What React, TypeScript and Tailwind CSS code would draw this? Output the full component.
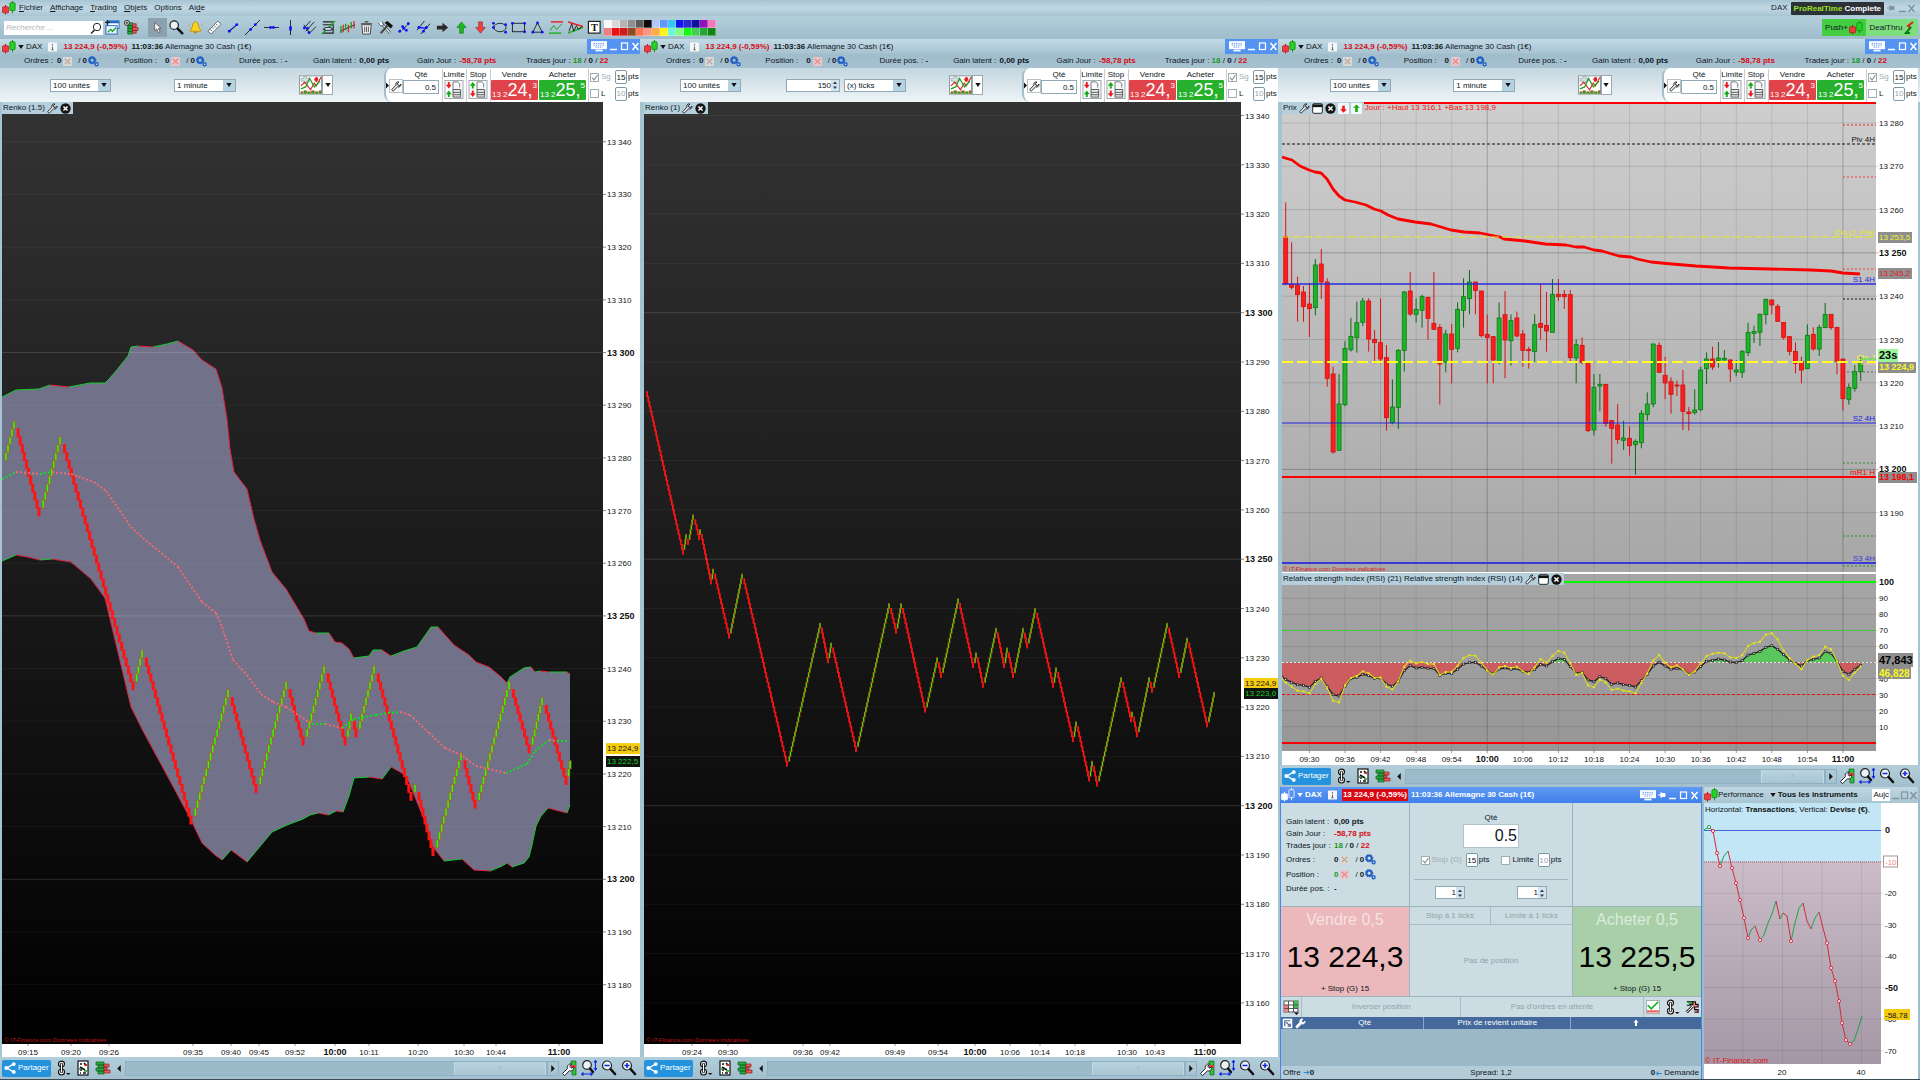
import { Fragment, type ReactNode } from 'react';
import { clsx } from 'clsx';

type Point = [number, number];
type Tick = [number, string];

const toPath = (pts: Point[]) => pts.map(([x, y]) => `${x},${y}`).join(' ');

/* ------------------------------------------------------------------ */
/* Icons                                                               */
/* ------------------------------------------------------------------ */

interface GlyphProps {
  children: ReactNode;
  className?: string;
}

function Glyph({ children, className = 'size-4' }: GlyphProps) {
  return (
    <svg viewBox="0 0 16 16" className={clsx('shrink-0', className)} fill="none" aria-hidden="true">
      {children}
    </svg>
  );
}

const CandlesIcon = ({ white = false }: { white?: boolean }) => (
  <Glyph className="size-[14px]">
    <path d="M4 4.500v11" stroke={white ? '#fff' : '#b01010'} />
    <rect x=".5" y="6.500" width="7" height="7" rx="1" fill={white ? '#fff' : '#f23a3a'} stroke={white ? '#fff' : '#a01010'} strokeWidth=".7" />
    <path d="M12 0v14" stroke={white ? '#fff' : '#0c8a0c'} />
    <rect x="9" y="2" width="6" height="9" rx="1" fill={white ? '#5b93ee' : '#27d327'} stroke={white ? '#fff' : '#0c8a0c'} strokeWidth=".9" />
  </Glyph>
);

const CaretDown = ({ className, color = '#111' }: { className?: string; color?: string }) => (
  <svg viewBox="0 0 8 6" className={clsx('h-1 w-[6px] shrink-0', className)} aria-hidden="true">
    <path d="M0 0h8L4 6z" fill={color} />
  </svg>
);

const WrenchIcon = ({ light = false }: { light?: boolean }) => (
  <Glyph className="size-[11px]">
    <path
      d="M14.500 4.500l-2 2-2.500-.5-.5-2.500 2-2C9.500.8 7 2 7 4.500c0 .6.100 1 .3 1.500L1.500 12c-1 1 1 3.200 2.300 2.200L9.500 8.500c3 1 5.500-1 5-4z"
      fill={light ? '#fff' : '#eef4f7'}
      stroke={light ? '#fff' : '#111'}
      strokeWidth="1.300"
    />
  </Glyph>
);

const CloseDot = () => (
  <Glyph className="size-[11px]">
    <circle cx="8" cy="8" r="7.500" fill="#151515" />
    <path d="M5 5l6 6M11 5l-6 6" stroke="#fff" strokeWidth="2.200" />
  </Glyph>
);

const WindowDot = () => (
  <Glyph className="size-[11px]">
    <rect x="1" y="1" width="14" height="14" rx="2" fill="#fff" stroke="#111" strokeWidth="1.300" />
    <path d="M1 2h14v4H1z" fill="#111" />
  </Glyph>
);

const ArrowTag = ({ up = false }: { up?: boolean }) => (
  <Glyph className="size-[11px]">
    <rect width="16" height="16" rx="1" fill="#f4f8fa" />
    {up ? <path d="M8 2l5 5H10v6H6V7H3z" fill="#1eae1e" /> : <path d="M8 14l5-5H10V4H6v5H3z" fill="#ee1c1c" />}
  </Glyph>
);

const GearsIcon = () => (
  <Glyph className="size-[11px]">
    <circle cx="6" cy="6" r="3.800" stroke="#1f5fc8" strokeWidth="3" />
    <circle cx="6" cy="6" r="5.400" stroke="#12449c" strokeDasharray="1.500 2" />
    <circle cx="12.500" cy="12" r="2.200" fill="#e6f0f8" stroke="#1f5fc8" strokeWidth="2" />
  </Glyph>
);

const CancelIcon = ({ red = false }: { red?: boolean }) => (
  <Glyph className="size-[9px]">
    <rect width="16" height="16" rx="1" fill={red ? '#e6c9cd' : '#dcdad6'} />
    <path d="M3 3l10 10M13 3L3 13" stroke={red ? '#ee8a8e' : '#b9aaa4'} strokeWidth="2.400" />
  </Glyph>
);

const InfoIcon = () => (
  <Glyph className="h-[10px] w-[9px]">
    <rect width="16" height="16" rx="1" fill="#f4f6f7" />
    <circle cx="8" cy="4" r="1.300" fill="#666" />
    <path d="M8 7v6M6 13h4" stroke="#666" strokeWidth="1.800" />
  </Glyph>
);

const KeyboardIcon = () => (
  <svg viewBox="0 0 18 12" className="h-[11px] w-[16px] shrink-0" aria-hidden="true">
    <rect x="0" y="0" width="18" height="9" fill="#fff" />
    <path d="M3 2.500h12M3 4.500h12M5 6.700h8" stroke="#4f8cf0" strokeDasharray="1.500 1" />
    <path d="M5 10.500h8" stroke="#fff" strokeWidth="2" />
  </svg>
);

const PinIcon = ({ color = '#fff' }: { color?: string }) => (
  <Glyph className="size-2">
    <path d="M0 8h6" stroke={color} strokeWidth="2" />
    <path d="M6 2v12M6 5h8v6H6z" fill={color} stroke={color} strokeWidth="2" />
  </Glyph>
);

function WindowButtons({ color = '#ffffff' }: { color?: string }) {
  return (
    <>
      <button aria-label="Réduire" className="h-[9px] w-[9px]">
        <svg viewBox="0 0 9 9" className="size-[9px]"><path d="M1 7.500h7" stroke={color} strokeWidth="1.500" /></svg>
      </button>
      <button aria-label="Agrandir" className="h-[9px] w-[9px]">
        <svg viewBox="0 0 9 9" className="size-[9px]"><rect x="1.500" y="1" width="6" height="6.500" fill="none" stroke={color} strokeWidth="1.200" /></svg>
      </button>
      <button aria-label="Fermer" className="h-[9px] w-[9px]">
        <svg viewBox="0 0 9 9" className="size-[9px]"><path d="M1.500 1l6 7M7.500 1l-6 7" stroke={color} strokeWidth="1.500" /></svg>
      </button>
    </>
  );
}

const MagnifierIcon = ({ sign }: { sign: '+' | '-' }) => (
  <Glyph>
    <circle cx="6" cy="5.500" r="4.500" fill="#e9f2f7" stroke="#222" strokeWidth="1.200" />
    <path d="M9.500 9l4.500 5" stroke="#111" strokeWidth="2.600" strokeLinecap="round" />
    <path d="M3.500 5.500h5" stroke="#1226e0" strokeWidth="1.500" />
    {sign === '+' && <path d="M6 3v5" stroke="#1226e0" strokeWidth="1.500" />}
  </Glyph>
);

const LinkIcon = () => (
  <Glyph>
    <ellipse cx="6.500" cy="4" rx="3" ry="2.800" fill="#fff" stroke="#111" strokeWidth="1.200" />
    <ellipse cx="6.500" cy="12" rx="3" ry="3" fill="#fff" stroke="#111" strokeWidth="1.200" />
    <path d="M6.500 4v8" stroke="#111" strokeWidth="2.600" strokeLinecap="round" />
    <path d="M6.500 4v8" stroke="#fff" strokeWidth="1" strokeLinecap="round" />
    <path d="M11 13h4.500l-2.200 2z" fill="#111" />
  </Glyph>
);

const DepthIcon = () => (
  <Glyph>
    <rect x="3" y="1" width="10" height="14" fill="#fff" stroke="#111" strokeWidth="1.200" />
    <path d="M5 4h2M9 3l2.500 2.500M5 7l5 3M5 10h2M8 13h3M5 13h1" stroke="#111" strokeWidth="1.600" />
    <path d="M9 5h3" stroke="#e02020" strokeWidth="1.500" />
    <path d="M4 9h2M9 11h3" stroke="#18a018" strokeWidth="1.500" />
  </Glyph>
);

const OrderBookIcon = () => (
  <Glyph>
    <path d="M1 2h8v3H1zM3 5h6v3H3zM1 8h8v3H1zM3 11h6v3H3z" fill="#28ab3c" stroke="#0c5f1c" strokeWidth=".7" />
    <path d="M9 4h5v3H9zM9 7h3v3H9zM9 10h6v3H9z" fill="#e85a5a" stroke="#8f1e1e" strokeWidth=".7" />
  </Glyph>
);

const ShareIcon = () => (
  <Glyph className="size-3">
    <path d="M13 2.500L4 8l9 5.500" stroke="#fff" strokeWidth="1.800" />
    <circle cx="13" cy="2.800" r="2.600" fill="#fff" />
    <circle cx="3.200" cy="8" r="2.800" fill="#fff" />
    <circle cx="13" cy="13.200" r="2.600" fill="#fff" />
  </Glyph>
);

const SettingsGreenIcon = () => (
  <Glyph>
    <path d="M10 1h5v5h-5zM11 6h4v9h-4z" fill="#2fbf3c" stroke="#0c6a1c" strokeWidth=".7" />
    <path d="M10 5h5v3h-5z" fill="#e04040" />
    <path d="M1.500 13.500l5-5c-1-2 1-5 4-4.500l-1.700 2.200 1.700 2 2.200-1.500c.6 3-2 5-4.200 4l-5 5z" fill="#fff" stroke="#111" strokeWidth=".9" />
  </Glyph>
);

const FitIcon = () => (
  <Glyph>
    <circle cx="6" cy="5" r="4.300" fill="#e9f2f7" stroke="#222" strokeWidth="1.200" />
    <path d="M9 8.500l3 3.500" stroke="#111" strokeWidth="2.400" strokeLinecap="round" />
    <path d="M14.500 1v8M13 2.500L14.500.5 16 2.500M13 8l1.500 2L16 8M1 14h10M2.500 12.500L.5 14l2 1.500M9.500 12.500l2 1.500-2 1.500" stroke="#1226e0" strokeWidth="1.100" />
  </Glyph>
);

const IndicatorIcon = () => (
  <svg viewBox="0 0 24 20" className="h-5 w-[23px]" aria-hidden="true">
    <rect x=".5" y=".5" width="23" height="19" fill="#fff" stroke="#8a9aa2" />
    <path d="M2 3h3V1h3v2h3v3H8v2H5V6H2z" fill="#d5dde2" stroke="#8a969c" strokeWidth=".6" />
    <path d="M2 11l4-4 6 8 4-7 2 3 5-9" fill="none" stroke="#d92020" strokeWidth="1.200" />
    <path d="M2 14l5-2 4-9 5 9 6-6" fill="none" stroke="#20a020" strokeWidth="1.300" />
    <path d="M16 4c1-3 4-3 4 0 0 2-2 3-2 3s-2-1-2-3z" fill="#e82020" />
    <path d="M2 19v-2h2v2m1 0v-3h3v3m1 0v-2h3v2m1 0v-3h3v3m1 0v-2h3v2m1 0v-3h2v3" fill="#16b016" stroke="#e02020" strokeWidth=".5" />
  </svg>
);

const OrderSheetIcon = ({ stop = false }: { stop?: boolean }) => (
  <svg viewBox="0 0 20 20" className="h-[19px] w-5" aria-hidden="true">
    <rect x=".5" y=".5" width="19" height="19" fill="#f7f9fa" stroke="#9aa7ad" />
    <path d="M9 2h5l2 2v4M9 2v8" fill="none" stroke="#777" />
    <path d="M9 10h8v8H9zM9 13h8M9 15.500h8" fill="#e8ecee" stroke="#555" />
    <path d="M3.500 2h2v3h2l-3 4-3-4h2z" fill={stop ? '#12a812' : '#e81c1c'} transform={stop ? 'rotate(180 4.500 5.500)' : undefined} />
    <path d="M3.500 11h2v3h2l-3 4-3-4h2z" fill={stop ? '#e81c1c' : '#12a812'} transform={stop ? undefined : 'rotate(180 4.500 14.500)'} />
  </svg>
);

const ends = (pts: Point[]) => pts.map(([x, y]) => <circle key={`${x}-${y}`} cx={x} cy={y} r="1.500" fill="#1010f0" />);

const tools: { name: string; icon: ReactNode; active?: boolean }[] = [
  {
    name: 'Nouveau graphique',
    icon: <><rect x="3" y="1" width="12" height="8" fill="#fff" stroke="#2268c8" /><path d="M3 1h12v2.500H3z" fill="#2268c8" /><rect x="1" y="6" width="12" height="9" fill="#eaf4ff" stroke="#2268c8" /><path d="M3 13l3-3 2 2 4-4" stroke="#16a016" strokeWidth="1.400" /><path d="M0 2.500h5M2.500 0v5" stroke="#222" strokeWidth="1.400" /></>,
  },
  {
    name: 'Carnet',
    icon: <><path d="M4 3h5v3H4zM4 6h5v3H4zM4 9h5v3H4zM4 12h5v3H4z" fill="#28ab3c" stroke="#0c5f1c" strokeWidth=".8" /><path d="M9 4h4v3H9zM9 8h6v3H9zM9 11h4v3H9z" fill="#e85a5a" stroke="#8f1e1e" strokeWidth=".8" /><circle cx="3" cy="3" r="2.700" fill="#fff" stroke="#222" /><path d="M3 1.500v3M1.500 3h3" stroke="#222" /></>,
  },
  { name: 'Curseur', active: true, icon: <path d="M5 2.500v9l2.200-2 1.800 4 1.800-.8L9 9h2.800z" fill="#fff" stroke="#555" strokeWidth=".9" /> },
  { name: 'Loupe', icon: <><circle cx="5.500" cy="5.500" r="4.500" fill="#e9f2f7" stroke="#222" strokeWidth="1.300" /><path d="M9.200 9.200l5 5" stroke="#111" strokeWidth="2.600" strokeLinecap="round" /></> },
  { name: 'Alerte', icon: <><path d="M8 1.500c-3.500 1-2.500 5.500-4.500 8-1 1-1.200 1.800-1 2.500h11c.3-.7 0-1.500-1-2.500-2-2.500-1-7-4.500-8z" fill="#ffd21c" stroke="#b78200" strokeWidth=".8" /><path d="M6 12.500c0 2.500 4 2.500 4 0z" fill="#c88a00" /><path d="M2 4c-1 1-1.500 2-1.500 3M14 4c1 1 1.500 2 1.500 3" stroke="#d8a820" strokeWidth=".8" /></> },
  { name: 'Règle', icon: <><path d="M1 12L11.500 1 15 4.500 4.500 15z" fill="#fafafa" stroke="#666" /><path d="M3.500 10l2 2M5.500 8l1.500 1.500M7.500 6l2 2M9.500 4L11 5.500" stroke="#555" /></> },
  { name: 'Segment', icon: <><path d="M3.500 12l8-7" stroke="#1010a0" strokeWidth="1.200" />{ends([[3.5, 12], [11.5, 5]])}</> },
  { name: 'Droite', icon: <><path d="M0 16L16 0" stroke="#222" />{ends([[6, 10], [11, 5]])}</> },
  { name: 'Horizontale', icon: <><path d="M0 8h16" stroke="#222" />{ends([[7, 8], [10, 8]])}</> },
  { name: 'Verticale', icon: <><path d="M8 0v16" stroke="#222" />{ends([[8, 8], [8, 10]])}</> },
  { name: 'Fourchette', icon: <><path d="M2 9l7-8M4 12L13 2M7 15l8-8M2 5l6 9" stroke="#222" />{ends([[2.5, 8.5], [7.5, 13.5], [6, 9]])}</> },
  { name: 'Fibonacci', icon: <><path d="M2 2h11M2 5h11v9H2M2 10h11" stroke="#222" strokeWidth="1.200" /><path d="M1 15L15 1" stroke="#18a018" strokeWidth="1.400" /><path d="M4 8h7v3H4z" stroke="#333" fill="#cde" /></> },
  { name: 'Cycle', icon: <><path d="M0 12l16-7" stroke="#222" /><path d="M1 6v8M6 4v7M12 2v7" stroke="#18a018" strokeWidth="1.400" /><path d="M3.500 5v8M9 5v8M15 1v8" stroke="#e02020" strokeWidth="1.300" /></> },
  { name: 'Supprimer', icon: <><path d="M3 5h10l-1 10H4z" fill="#f0f0f0" stroke="#444" /><path d="M2 4h12M6 2h4" stroke="#444" strokeWidth="1.300" /><path d="M6 7v6M8 7v6M10 7v6" stroke="#555" /></> },
  { name: 'Outils', icon: <><path d="M4 4l9 10" stroke="#444" strokeWidth="2.800" /><path d="M4 4l9 10" stroke="#f4f4f4" strokeWidth="1.400" /><path d="M1 3c0 3 3 4 5 2.500L4.500 1.500" fill="#fff" stroke="#444" /><path d="M10 6L3 14" stroke="#444" strokeWidth="2.200" /><path d="M7 3l3-2 6 5-2.500 3z" fill="#111" /></> },
  { name: 'Points', icon: <><path d="M2 13L14 3" stroke="#222" strokeDasharray="3 1" />{ends([[3, 12], [6, 7], [12, 4], [10, 11], [7.5, 9]])}</> },
  { name: 'Canal', icon: <><path d="M1 11L9 1M5 15L15 4" stroke="#222" /><path d="M3 8l9 1" stroke="#1010f0" strokeWidth="1.400" />{ends([[3, 8], [8, 12], [11, 8]])}</> },
  { name: 'Flèche', icon: <path d="M2 6h6V3l6 5-6 5v-3H2z" fill="#2a2a2a" /> },
  { name: 'Flèche haut', icon: <path d="M8 2l5 6h-3v6H6V8H3z" fill="#1cb81c" stroke="#0a700a" strokeWidth=".6" /> },
  { name: 'Flèche bas', icon: <path d="M8 14l5-6h-3V2H6v6H3z" fill="#f04444" stroke="#901010" strokeWidth=".6" /> },
  { name: 'Ellipse', icon: <><ellipse cx="8.500" cy="8" rx="6.500" ry="4.500" stroke="#222" />{ends([[1.5, 3.5], [14.5, 13], [1.5, 8], [14.5, 5]])}</> },
  { name: 'Rectangle', icon: <><rect x="1.500" y="3.500" width="13" height="9" stroke="#222" />{ends([[1.5, 3.5], [14.5, 12.5], [14.5, 3.5]])}</> },
  { name: 'Triangle', icon: <><path d="M8 3l5 10H3z" stroke="#222" />{ends([[8, 3], [13, 13], [3, 13]])}</> },
  { name: 'Support', icon: <><path d="M2 2h13" stroke="#e82020" strokeWidth="1.500" /><path d="M0 14h13" stroke="#18b018" strokeWidth="1.500" /><path d="M1 11l4-5 3 4 6-6" stroke="#18a018" /></> },
  { name: 'Biseau', icon: <><path d="M0 2l16 5" stroke="#e82020" strokeWidth="1.600" /><path d="M0 14l16-6" stroke="#18b018" strokeWidth="1.600" /><path d="M1 12l3-8 2 8 3-6 2 4 4-3" stroke="#222" /></> },
  { name: 'Texte', icon: <><rect x="1.500" y="1.500" width="12.500" height="12.500" fill="#fff" stroke="#222" strokeWidth="1.300" /><text x="8" y="12" textAnchor="middle" fill="#111" className="font-['Liberation_Serif',serif] text-[11px] font-bold">T</text></> },
];

const palette = [
  ['#f8f8f8', '#d8d8d8', '#b4b4b4', '#909090', '#5c5c5c', '#0c0c0c', '#b4c4ff', '#6098fc', '#38c4f4', '#1414ec', '#2828cc', '#101098', '#9410bc', '#f478bc'],
  ['#ec8080', '#e81414', '#d01c1c', '#8c4a24', '#fc7450', '#fc9484', '#fcac40', '#fcf414', '#6cf4d4', '#84fc84', '#14f814', '#44cc54', '#2ca43c', '#108414'],
];

/* ------------------------------------------------------------------ */
/* Chart data                                                          */
/* ------------------------------------------------------------------ */

// [x, price above 13 000] of every reversal
const renkoLeft: Point[] = [
  [4, 279.5], [14, 287], [39, 269], [60, 284], [133, 236], [142, 243.5], [191, 210.5], [228, 236], [256, 216.5],
  [286, 237.5], [303, 225.5], [324, 240.5], [345, 225.5], [351, 231.5], [356, 227], [374, 240.5], [411, 215],
  [415, 218], [433, 204.5], [461, 224], [475, 213.5], [509, 237.5], [529, 224], [542, 234.5], [566, 218], [570, 222.5],
];

const renkoMiddle: Point[] = [
  [646, 284], [683, 251], [686, 255], [688, 253], [693, 259], [699, 254], [700, 256], [711, 245], [713, 248],
  [729, 234], [742, 247], [787, 208], [820, 237], [828, 229], [831, 233], [856, 211], [889, 241], [896, 235],
  [901, 241], [925, 219], [937, 230], [941, 226], [958, 242], [973, 228], [976, 231], [983, 224], [996, 236],
  [1004, 228], [1007, 232], [1013, 226], [1023, 236], [1027, 232], [1035, 240], [1053, 224], [1056, 228],
  [1073, 213], [1076, 217], [1089, 205], [1092, 209], [1097, 204], [1121, 226], [1131, 217], [1132, 219],
  [1137, 214], [1149, 226], [1152, 223], [1167, 237], [1179, 226], [1187, 234], [1207, 216], [1214, 223],
];

const bandTop: Point[] = [
  [2, 397], [16, 390], [39, 389], [50, 385], [69, 387], [90, 383], [105, 383], [109, 379], [116, 371], [128, 356],
  [131, 347], [138, 346], [153, 347], [167, 344], [178, 341], [193, 350], [202, 360], [216, 369], [222, 388],
  [227, 419], [230, 449], [234, 472], [247, 489], [254, 519], [260, 540], [272, 572], [286, 589], [304, 619],
  [309, 631], [316, 633], [329, 633], [335, 642], [342, 643], [349, 649], [354, 658], [369, 656], [373, 650],
  [382, 650], [391, 656], [404, 651], [417, 647], [431, 627], [438, 627], [454, 645], [469, 655], [476, 662],
  [489, 667], [500, 676], [507, 683], [510, 677], [524, 668], [531, 667], [535, 672], [540, 671], [549, 672],
  [567, 672], [570, 674],
];

const bandBottom: Point[] = [
  [2, 561], [16, 555], [28, 557], [40, 560], [52, 559], [71, 562], [91, 579], [105, 598], [116, 644], [131, 707],
  [143, 731], [176, 792], [191, 820], [202, 843], [215, 855], [222, 860], [231, 850], [247, 862], [272, 832],
  [287, 825], [303, 819], [310, 815], [318, 813], [328, 815], [336, 811], [343, 812], [349, 796], [354, 778],
  [369, 777], [382, 779], [391, 767], [402, 773], [408, 780], [424, 819], [433, 847], [444, 861], [462, 859],
  [474, 870], [490, 871], [502, 866], [507, 863], [512, 867], [524, 863], [529, 857], [532, 845], [536, 826],
  [541, 816], [548, 808], [567, 813], [570, 805],
];

const bandMiddle: Point[] = [
  [2, 479], [16, 472], [40, 474], [52, 472], [71, 474], [94, 482], [106, 491], [131, 527], [143, 538], [178, 567],
  [202, 602], [216, 613], [222, 627], [233, 660], [247, 675], [261, 694], [273, 702], [286, 707], [312, 724],
  [325, 724], [342, 728], [354, 719], [376, 715], [388, 713], [400, 712], [410, 715], [429, 733], [445, 748],
  [463, 756], [476, 766], [506, 773], [527, 764], [535, 751], [549, 740], [557, 741], [569, 741],
];

const leftTimes: Tick[] = [
  [28, '09:15'], [71, '09:20'], [109, '09:26'], [193, '09:35'], [231, '09:40'], [259, '09:45'], [295, '09:52'],
  [335, '10:00'], [369, '10:11'], [418, '10:20'], [464, '10:30'], [496, '10:44'], [559, '11:00'],
];

const middleTimes: Tick[] = [
  [692, '09:24'], [728, '09:30'], [803, '09:36'], [830, '09:42'], [895, '09:49'], [938, '09:54'], [975, '10:00'],
  [1010, '10:06'], [1040, '10:14'], [1075, '10:18'], [1127, '10:30'], [1155, '10:43'], [1205, '11:00'],
];

const rightTimes: Tick[] = [
  '09:30', '09:36', '09:42', '09:48', '09:54', '10:00', '10:06', '10:12', '10:18', '10:24', '10:30', '10:36',
  '10:42', '10:48', '10:54', '11:00',
].map((t, i) => [1309.4 + i * 35.57, t]);

// high, body top, body bottom, low in thirds of a pixel, one candle per minute; 1 = up
const candles: [number, number, number, number, 0 | 1][] = [
  [307, 410, 551, 556, 0], [427, 553, 562, 569, 0], [530, 556, 584, 665, 0], [558, 576, 620, 665, 0],
  [550, 612, 626, 711, 0], [477, 495, 623, 646, 1], [447, 492, 546, 597, 0], [535, 546, 835, 860, 0],
  [800, 822, 1056, 1061, 0], [822, 912, 1051, 1051, 1], [723, 745, 914, 919, 1], [653, 709, 749, 755, 1],
  [605, 668, 713, 758, 1], [594, 603, 667, 678, 1], [595, 603, 717, 755, 0], [690, 718, 728, 790, 0],
  [595, 728, 777, 790, 0], [735, 773, 953, 992, 0], [838, 921, 967, 973, 1], [747, 751, 922, 987, 1],
  [573, 576, 751, 815, 1], [516, 573, 642, 648, 0], [595, 628, 643, 668, 1], [584, 590, 631, 683, 1],
  [590, 592, 655, 719, 0], [516, 670, 688, 690, 0], [672, 682, 792, 914, 0], [689, 702, 786, 817, 1],
  [672, 702, 748, 850, 0], [607, 628, 745, 757, 1], [535, 590, 631, 683, 1], [510, 546, 596, 643, 1],
  [546, 546, 571, 643, 0], [573, 573, 707, 712, 0], [643, 703, 713, 850, 0], [708, 710, 780, 850, 0],
  [607, 654, 786, 793, 1], [573, 644, 720, 835, 0], [643, 662, 722, 797, 1], [635, 654, 708, 712, 0],
  [690, 702, 751, 800, 0], [740, 748, 752, 806, 0], [643, 674, 755, 785, 1], [551, 670, 682, 719, 0],
  [576, 676, 693, 755, 0], [537, 583, 697, 697, 1], [537, 583, 590, 603, 0], [570, 583, 590, 627, 0],
  [570, 584, 773, 784, 0], [719, 734, 774, 850, 1], [712, 736, 787, 793, 0], [787, 787, 992, 996, 0],
  [822, 862, 990, 1007, 1], [822, 853, 858, 934, 1], [853, 853, 971, 980, 0], [960, 962, 985, 1091, 0],
  [912, 975, 1018, 1032, 0], [962, 1014, 1021, 1050, 1], [980, 1015, 1037, 1067, 0], [1018, 1024, 1034, 1124, 1],
  [930, 940, 1028, 1045, 1], [877, 912, 944, 962, 1], [731, 732, 912, 922, 1], [727, 736, 817, 818, 0],
  [770, 826, 849, 897, 0], [832, 845, 883, 941, 0], [842, 855, 858, 888, 0], [810, 855, 934, 990, 0],
  [921, 936, 941, 992, 0], [868, 930, 938, 944, 1], [800, 810, 929, 934, 1], [757, 777, 806, 852, 1],
  [740, 777, 801, 810, 0], [726, 774, 781, 803, 1], [750, 775, 780, 782, 1], [777, 780, 807, 846, 0],
  [780, 810, 816, 829, 1], [750, 754, 817, 834, 1], [668, 697, 758, 768, 1], [677, 694, 700, 729, 1],
  [640, 643, 697, 738, 1], [596, 598, 644, 673, 1], [598, 600, 615, 643, 0], [612, 619, 664, 664, 0],
  [667, 667, 712, 719, 0], [708, 710, 754, 766, 0], [727, 754, 790, 820, 0], [770, 784, 810, 850, 0],
  [673, 706, 806, 806, 1], [682, 703, 747, 752, 0], [674, 682, 747, 768, 1], [609, 643, 683, 683, 1],
  [643, 643, 683, 690, 0], [682, 682, 784, 823, 0], [777, 777, 896, 932, 0], [850, 862, 898, 914, 1],
  [795, 815, 865, 875, 1], [772, 786, 815, 843, 1],
];

const movingAverage: Point[] = [
  [1282, 157], [1292, 160], [1300, 166], [1309, 170], [1315, 172], [1321, 173], [1327, 179], [1333, 189],
  [1339, 196], [1345, 200], [1355, 202], [1366, 205], [1374, 209], [1381, 211], [1388, 215], [1398, 219],
  [1415, 222], [1431, 224], [1451, 230], [1464, 232], [1480, 233], [1500, 237], [1504, 239], [1525, 241],
  [1545, 244], [1566, 245], [1576, 247], [1584, 247], [1594, 250], [1602, 251], [1619, 256], [1631, 257],
  [1637, 259], [1651, 262], [1672, 264], [1696, 266], [1729, 268], [1770, 269], [1811, 270], [1831, 271],
  [1843, 273], [1860, 274],
];

const rsiSlow = [
  658, 667, 674, 676, 682, 664, 654, 680, 704, 708, 678, 656, 652, 643, 647, 655, 654, 672, 679, 664, 632, 617, 624,
  622, 625, 626, 646, 640, 640, 628, 612, 608, 607, 618, 632, 642, 627, 624, 628, 626, 634, 637, 628, 613, 618, 605,
  596, 598, 620, 640, 637, 660, 665, 650, 656, 673, 669, 674, 676, 681, 662, 643, 618, 607, 618, 628, 625, 628, 643,
  636, 620, 604, 601, 597, 600, 606, 608, 602, 585, 580, 574, 562, 557, 568, 584, 600, 610, 618, 602, 598, 594, 575,
  580, 604, 634, 643, 628, 616,
];

const rsiFast = [
  668, 680, 692, 694, 700, 672, 656, 685, 722, 727, 676, 654, 648, 634, 640, 654, 652, 680, 688, 664, 620, 602, 610,
  606, 612, 612, 645, 636, 636, 617, 594, 586, 587, 608, 632, 644, 622, 618, 624, 620, 634, 642, 622, 597, 608, 588,
  573, 578, 610, 645, 638, 676, 682, 658, 668, 690, 686, 692, 694, 700, 668, 640, 602, 585, 608, 622, 616, 628, 645,
  634, 610, 588, 581, 578, 580, 592, 594, 586, 558, 550, 545, 524, 520, 538, 572, 594, 612, 628, 600, 590, 586, 560,
  568, 604, 648, 660, 638, 620,
];

// x, y, 1 when the point closes a losing trade and carries a marker
const equity: [number, number, 0 | 1][] = [
  [1704, 830, 0], [1709, 827, 1], [1713, 831, 1], [1717, 853, 1], [1720, 866, 1], [1724, 856, 0], [1728, 851, 0],
  [1732, 868, 1], [1736, 883, 1], [1740, 900, 1], [1744, 918, 1], [1748, 938, 1], [1751, 930, 0], [1755, 926, 0],
  [1760, 940, 1], [1764, 935, 0], [1768, 923, 0], [1772, 914, 0], [1776, 901, 0], [1780, 919, 0], [1783, 913, 0],
  [1787, 916, 0], [1791, 941, 1], [1795, 923, 0], [1799, 908, 0], [1803, 903, 0], [1807, 921, 0], [1811, 929, 0],
  [1815, 918, 0], [1819, 912, 0], [1823, 928, 0], [1827, 943, 1], [1831, 968, 1], [1835, 981, 1], [1839, 1001, 1],
  [1842, 1023, 1], [1846, 1040, 1], [1850, 1044, 1], [1854, 1041, 0], [1858, 1029, 0], [1862, 1016, 0],
];

/* ------------------------------------------------------------------ */
/* Charts                                                              */
/* ------------------------------------------------------------------ */

const svgText = "text-[8px] font-['Liberation_Sans',Arial,sans-serif]";
const svgStrong = "text-[9px] font-bold font-['Liberation_Sans',Arial,sans-serif]";

interface SlopesProps {
  points: Point[];
  width?: number;
  dash?: string;
  up?: string;
  down?: string;
}

function Slopes({ points, width = 1, dash, up = '#19c832', down = '#e0203c' }: SlopesProps) {
  return (
    <>
      {points.slice(1).map(([x, y], i) => {
        const [px, py] = points[i];
        return <line key={x} x1={px} y1={py} x2={x} y2={y} stroke={y <= py ? up : down} strokeWidth={width} strokeDasharray={dash} />;
      })}
    </>
  );
}

interface RenkoProps {
  legs: Point[];
  size: number;
  width: number;
  edge: string;
  toY: (price: number) => number;
}

function RenkoBricks({ legs, size, width, edge, toY }: RenkoProps) {
  return (
    <>
      {legs.slice(1).map(([x2, p2], i) => {
        const [x1, p1] = legs[i];
        const up = p2 > p1;
        const count = Math.round(Math.abs(p2 - p1) / size);
        // a reversal leaves the first brick of the leg out
        return Array.from({ length: count }, (_, k) => {
          if (k === 0 && i > 0) return null;
          const top = toY(up ? p1 + (k + 1) * size : p1 - k * size);
          const height = toY(0) - toY(size);
          const x = x1 + ((x2 - x1) * (k + 1)) / count - width / 2;
          return (
            <Fragment key={`${x1}-${k}`}>
              <rect x={x} y={top - 0.5} width={width} height={height + 1} fill={up ? edge : '#ff1414'} />
              {up && <rect x={x + width / 4} y={top + 0.3} width={width / 2} height={height - 0.6} fill="#28ff00" />}
            </Fragment>
          );
        });
      })}
    </>
  );
}

function TimeAxis({ ticks, y }: { ticks: Tick[]; y: number }) {
  return (
    <g textAnchor="middle" fill="#111">
      {ticks.map(([x, t]) => (
        <Fragment key={t}>
          <line x1={x} x2={x} y1={y - 8} y2={y - 6} stroke="#999" />
          <text x={x} y={y + 3} className={t.endsWith(':00') ? svgStrong : svgText}>{t}</text>
        </Fragment>
      ))}
    </g>
  );
}

interface PriceTagProps {
  x: number;
  y: number;
  w: number;
  bg: string;
  color: string;
  bold?: boolean;
  children: string;
}

function PriceTag({ x, y, w, bg, color, bold, children }: PriceTagProps) {
  return (
    <g>
      <rect x={x} y={y - 5} width={w} height="11" fill={bg} />
      <text x={x + 1} y={y + 3} fill={color} className={bold ? svgStrong : svgText}>{children}</text>
    </g>
  );
}

interface DarkChartProps {
  left: number;
  plotWidth: number;
  fullWidth: number;
  prices: number[];
  times: Tick[];
  toY: (price: number) => number;
  last: string;
  lastY: number;
  children: ReactNode;
}

function DarkChart({ left, plotWidth, fullWidth, prices, times, toY, last, lastY, children }: DarkChartProps) {
  const right = left + plotWidth;
  return (
    <svg viewBox={`${left} 102 ${fullWidth} 955`} className="block h-auto w-full bg-white">
      <defs>
        <linearGradient id={`night-${left}`} x1="0" y1="0" x2="0" y2="1">
          <stop offset="0" stopColor="#333333" />
          <stop offset="1" stopColor="#000000" />
        </linearGradient>
      </defs>
      <rect x={left} y="102" width={plotWidth} height="942" fill={`url(#night-${left})`} />
      {children}
      {prices.map((p) => (
        <Fragment key={p}>
          <line x1={left} x2={right} y1={toY(p)} y2={toY(p)} stroke="#fff" strokeOpacity={p % 50 === 0 ? 0.14 : 0.05} />
          <line x1={right} x2={right + 3} y1={toY(p)} y2={toY(p)} stroke="#888" />
          <text x={right + 4} y={toY(p) + 3} className={p % 50 === 0 ? svgStrong : svgText} fill="#111">
            {`13 ${p}`}
          </text>
        </Fragment>
      ))}
      <PriceTag x={right + 3} y={toY(224.9)} w={34} bg="#f6cc10" color="#111">13 224,9</PriceTag>
      <PriceTag x={right + 3} y={lastY} w={34} bg="#101410" color="#14d026">{last}</PriceTag>
      <text x={left + 2} y="1042" className="font-['Liberation_Sans',Arial,sans-serif] text-[6px] italic" fill="#c01010">
        © IT-Finance.com Données indicatives
      </text>
      <TimeAxis ticks={times} y={1052} />
    </svg>
  );
}

const range = (from: number, to: number, step: number) =>
  Array.from({ length: Math.floor((to - from) / step) + 1 }, (_, i) => from + i * step);

function LeftRenko() {
  const toY = (p: number) => 352.5 + (300 - p) * 5.268;
  return (
    <DarkChart left={2} plotWidth={601} fullWidth={638} prices={range(180, 340, 10)} times={leftTimes} toY={toY} last="13 222,5" lastY={761}>
      <polygon points={toPath([...bandTop, ...[...bandBottom].reverse()])} fill="#71718a" />
      <Slopes points={bandTop} />
      <Slopes points={bandBottom} />
      <RenkoBricks legs={renkoLeft} size={1.5} width={3} edge="#a8602c" toY={toY} />
      <Slopes points={bandMiddle} width={2} dash="2 2" up="#10e020" down="#f06a70" />
    </DarkChart>
  );
}

function MiddleRenko() {
  const toY = (p: number) => 411.3 + (280 - p) * 4.93;
  return (
    <DarkChart left={644} plotWidth={597} fullWidth={634} prices={range(160, 340, 10)} times={middleTimes} toY={toY} last="13 223,0" lastY={693}>
      <RenkoBricks legs={renkoMiddle} size={1} width={1.8} edge="#a85010" toY={toY} />
    </DarkChart>
  );
}

const minuteX = (i: number) => 1285.7 + i * 5.928;

const levels = [
  { y: 144, color: '#111', label: 'Piv 4H', width: 1, dash: '3 2' },
  { y: 237, color: '#eaea20', label: 'Clo (J_Pre)', width: 1, dash: '8 3' },
  { y: 284, color: '#2a2ad8', label: 'S1 4H', width: 1.5 },
  { y: 362, color: '#ffff20', label: 'Clo J', width: 2, dash: '11 4' },
  { y: 423, color: '#2020e0', label: 'S2 4H', width: 1 },
  { y: 477, color: '#fa0000', label: 'mR1 H', width: 2 },
  { y: 563, color: '#3a3ad8', label: 'S3 4H', width: 2 },
];

const pivots: [number, string][] = [
  [125, '#f02020'], [177, '#f04040'], [269, '#f04040'], [299, '#111'], [372, '#666'], [463, '#2c8c2c'], [536, '#2c8c2c'], [566, '#2c8c2c'],
];

function PriceChart() {
  const toY = (p: number) => 123 + (280 - p) * 4.33;
  return (
    <svg viewBox="1282 102 636 471" className="block h-auto w-full bg-white">
      <defs>
        <linearGradient id="day" x1="0" y1="0" x2="0" y2="1">
          <stop offset="0" stopColor="#cecece" />
          <stop offset="1" stopColor="#a7a7a7" />
        </linearGradient>
      </defs>
      <rect x="1282" y="102" width="594" height="470" fill="url(#day)" />
      {rightTimes.map(([x, t]) => (
        <line key={t} x1={x} x2={x} y1="102" y2="572" stroke="#000" strokeOpacity={t.endsWith(':00') ? 0.22 : 0.1} />
      ))}
      {range(190, 280, 10).map((p) => (
        <Fragment key={p}>
          <line x1="1282" x2="1879" y1={toY(p)} y2={toY(p)} stroke="#000" strokeOpacity={p % 50 === 0 ? 0.24 : 0.12} />
          <text x="1879" y={toY(p) + 3} className={p % 50 === 0 ? svgStrong : svgText} fill="#111">{`13 ${p}`}</text>
        </Fragment>
      ))}
      <line x1="1360" x2="1876" y1="103" y2="103" stroke="#fa0000" strokeWidth="2" />
      {pivots.map(([y, c]) => (
        <line key={y} x1="1843" x2="1876" y1={y} y2={y} stroke={c} strokeDasharray="2 2" />
      ))}
      {candles.map(([high, top, bottom, low, up], i) => {
        const x = minuteX(i);
        return (
          <Fragment key={i}>
            <line x1={x} x2={x} y1={100 + high / 3} y2={100 + low / 3} stroke={up ? '#0c6a14' : '#d81414'} />
            <rect x={x - 2} y={100 + top / 3} width="4" height={(bottom - top) / 3} fill={up ? '#1cb428' : '#ff1c1c'} stroke={up ? '#0c7c14' : '#cc1010'} strokeWidth=".8" />
          </Fragment>
        );
      })}
      <polyline points={toPath(movingAverage)} fill="none" stroke="#fa0000" strokeWidth="2.800" strokeLinejoin="round" />
      {levels.map(({ y, color, label, width, dash }) => (
        <Fragment key={label}>
          <line x1="1282" x2="1876" y1={y} y2={y} stroke={color} strokeWidth={width} strokeDasharray={dash} />
          <text x="1875" y={y - 2} textAnchor="end" className={svgText} fill={color}>{label}</text>
        </Fragment>
      ))}
      <line x1="1861" x2="1876" y1="359" y2="359" stroke="#30e040" />
      <line x1="1861" x2="1876" y1="364" y2="364" stroke="#f4c0a0" />
      <PriceTag x={1878} y={237} w={34} bg="#8e8e8e" color="#f2f230">13 253,5</PriceTag>
      <PriceTag x={1878} y={273} w={34} bg="#8e8e8e" color="#f01818">13 245,2</PriceTag>
      <rect x="1878" y="349" width="20" height="13" fill="#9af49a" />
      <text x="1879" y="359" className="font-['Liberation_Sans',Arial,sans-serif] text-[11px] font-bold">23s</text>
      <PriceTag x={1878} y={367} w={38} bg="#8e8e8e" color="#f8f820" bold>13 224,9</PriceTag>
      <PriceTag x={1878} y={477} w={39} bg="#8e8e8e" color="#fa0000" bold>13 198,1</PriceTag>
      <text x="1283" y="571" className="font-['Liberation_Sans',Arial,sans-serif] text-[6px] italic" fill="#e01010">
        © IT-Finance.com Données indicatives
      </text>
    </svg>
  );
}

function RsiChart() {
  const toY = (v: number) => 582.3 + (100 - v) * 1.604;
  const line = (values: number[]): Point[] => values.map((v, i) => [minuteX(i), 460 + v / 3]);
  const slow: Point[] = [[1282, 677], ...line(rsiSlow)];
  const fast: Point[] = [[1282, 679], ...line(rsiFast)];
  const area = toPath([[1282, 662.5], ...slow, [1861, 662.5]]);
  return (
    <svg viewBox="1282 573 636 192" className="block h-auto w-full bg-white">
      <defs>
        <linearGradient id="dusk" x1="0" y1="0" x2="0" y2="1">
          <stop offset="0" stopColor="#a6a6a6" />
          <stop offset="1" stopColor="#969696" />
        </linearGradient>
        <clipPath id="above"><rect x="1282" y="573" width="594" height="89.500" /></clipPath>
        <clipPath id="below"><rect x="1282" y="662.500" width="594" height="88" /></clipPath>
      </defs>
      <rect x="1282" y="574" width="594" height="177" fill="url(#dusk)" />
      {rightTimes.map(([x, t]) => (
        <line key={t} x1={x} x2={x} y1="574" y2="751" stroke="#000" strokeOpacity={t.endsWith(':00') ? 0.2 : 0.08} />
      ))}
      {range(10, 100, 10).map((v) => (
        <Fragment key={v}>
          <line x1="1282" x2="1879" y1={toY(v)} y2={toY(v)} stroke="#000" strokeOpacity=".1" />
          {v !== 50 && <text x="1879" y={toY(v) + 3} className={v === 100 ? svgStrong : svgText} fill="#111">{v}</text>}
        </Fragment>
      ))}
      <polygon points={area} fill="#58c85c" clipPath="url(#above)" />
      <polygon points={area} fill="#cc5c60" clipPath="url(#below)" />
      <line x1="1282" x2="1876" y1="582" y2="582" stroke="#00f800" strokeWidth="2" />
      <line x1="1282" x2="1876" y1="630.500" y2="630.500" stroke="#10e810" strokeDasharray="3 2" />
      <line x1="1282" x2="1876" y1="662.500" y2="662.500" stroke="#e4e4e4" strokeDasharray="2 2" />
      <line x1="1282" x2="1876" y1="694.500" y2="694.500" stroke="#f01010" strokeDasharray="3 2" />
      <line x1="1282" x2="1876" y1="743" y2="743" stroke="#fa0000" strokeWidth="2" />
      <polyline points={toPath(slow)} fill="none" stroke="#222" strokeWidth="1.300" />
      {slow.map(([x, y]) => <rect key={x} x={x - 1} y={y - 1} width="2" height="2" fill="#ddd" stroke="#222" strokeWidth=".7" />)}
      <polyline points={toPath(fast)} fill="none" stroke="#d6d620" strokeWidth="1.100" />
      {fast.map(([x, y]) => <rect key={x} x={x - 1} y={y - 1} width="2" height="2" fill="#e4e420" />)}
      <g className="font-['Liberation_Sans',Arial,sans-serif] text-[11px] font-bold">
        <rect x="1878" y="653" width="35" height="14" fill="#8e8e8e" />
        <text x="1879" y="664">47,843</text>
        <rect x="1878" y="667" width="33" height="12" fill="#8e8e8e" />
        <text x="1879" y="677" className="text-[10px]" fill="#f8f820">46,828</text>
      </g>
      <TimeAxis ticks={rightTimes} y={759} />
    </svg>
  );
}

function PerformanceChart() {
  const toY = (v: number) => 830.3 - v * 3.147;
  return (
    <svg viewBox="1704 803 214 276" className="block h-auto w-full bg-white">
      <defs>
        <linearGradient id="mauve" x1="0" y1="0" x2="0" y2="1">
          <stop offset="0" stopColor="#cbbcc8" />
          <stop offset="1" stopColor="#a697a6" />
        </linearGradient>
      </defs>
      <rect x="1704" y="803" width="177" height="59" fill="#c2e6f5" />
      <rect x="1704" y="862" width="177" height="202" fill="url(#mauve)" />
      {[1743, 1782.5, 1822, 1861.5].map((x) => (
        <line key={x} x1={x} x2={x} y1="862" y2="1064" stroke="#000" strokeOpacity=".07" />
      ))}
      {range(-70, 0, 10).map((v) => (
        <Fragment key={v}>
          <line x1="1704" x2="1884" y1={toY(v)} y2={toY(v)} stroke="#000" strokeOpacity=".09" />
          <text x="1885" y={toY(v) + 3} className={v % 50 === 0 ? svgStrong : svgText} fill={v === -10 ? '#f08888' : '#111'}>
            {v}
          </text>
        </Fragment>
      ))}
      <rect x="1883.500" y="856" width="14" height="11" fill="none" stroke="#a89090" />
      <line x1="1704" x2="1881" y1="862" y2="862" stroke="#c8404c" strokeDasharray="1 1" strokeWidth=".8" />
      <line x1="1704" x2="1881" y1="830.500" y2="830.500" stroke="#4a64e0" />
      <Slopes points={equity.map(([x, y]) => [x, y] as Point)} up="#22a04a" down="#d02c3c" />
      {equity.filter(([, , mark]) => mark).map(([x, y], i) => (
        <circle key={x} cx={x} cy={y} r="1.600" fill="#f4e8ec" stroke={i === 0 ? '#22a04a' : '#d02c3c'} strokeWidth=".9" />
      ))}
      <rect x="1884" y="1009" width="26" height="11" fill="#f6cc10" />
      <g className={svgText} fill="#111">
        <text x="1885" y="1018">-58,78</text>
        <text x="1705" y="812">
          Horizontal: <tspan fontWeight="700">Transactions</tspan>, Vertical: <tspan fontWeight="700">Devise (€)</tspan>,
        </text>
        <text x="1705" y="1063" fill="#e01010">© IT-Finance.com</text>
        <text x="1782" y="1075" textAnchor="middle">20</text>
        <text x="1861" y="1075" textAnchor="middle">40</text>
      </g>
    </svg>
  );
}

/* ------------------------------------------------------------------ */
/* Window chrome                                                       */
/* ------------------------------------------------------------------ */

function TitleBar() {
  return (
    <div className="flex h-[15px] items-center bg-linear-to-b from-[#c4dbe6] to-[#a5c1cf] pr-[2px]">
      <div className="flex flex-1 items-center pl-[2px]">
        <CandlesIcon />
        <CaretDown className="mx-[2px]" />
        <span className="mr-[6px]">DAX</span>
        <InfoIcon />
        <span className="ml-[6px] font-bold text-[#d80a14]">13 224,9 (-0,59%)</span>
        <span className="ml-1 font-bold">11:03:36</span>
        <span className="ml-[2px]">Allemagne 30 Cash (1€)</span>
      </div>
      <div className="flex h-full items-center gap-[2px] bg-[#5593f2] pl-1">
        <KeyboardIcon />
        <WindowButtons />
      </div>
    </div>
  );
}

function Counter({ label, red }: { label: string; red?: boolean }) {
  return (
    <div className="flex items-center">
      <span>{label}</span>
      <span className={clsx('mr-[2px] font-bold', red ? 'ml-2' : 'ml-1')}>0</span>
      <CancelIcon red={red} />
      <span className="ml-[6px] mr-[2px]">/</span>
      <span className="mr-px font-bold">0</span>
      <GearsIcon />
    </div>
  );
}

const TradesCount = () => (
  <span className="font-bold">
    <span className="text-[#189a1c]">18</span> <span className="font-normal">/</span> 0 <span className="font-normal">/</span>{' '}
    <span className="text-[#d80a14]">22</span>
  </span>
);

function StatusRow() {
  return (
    <div className="grid h-[14px] grid-cols-[100fr_115fr_74fr_104fr_109fr_116fr] items-center whitespace-nowrap bg-linear-to-b from-[#9fbccb] to-[#a6c2d0] pl-6">
      <Counter label="Ordres :" />
      <Counter label="Position :" red />
      <span>Durée pos. : <b>-</b></span>
      <span>Gain latent : <b className="ml-px">0,00 pts</b></span>
      <span>Gain Jour : <b className="ml-px text-[#d80a14]">-58,78 pts</b></span>
      <span>Trades jour : <TradesCount /></span>
    </div>
  );
}

function Dropdown({ label, value, className }: { label: string; value: string; className?: string }) {
  return (
    <div className={clsx('flex h-[13px] border border-[#8fa9b6] bg-white', className)}>
      <select aria-label={label} className="h-full min-w-0 flex-1 appearance-none bg-white pl-[2px] text-[8px] leading-[11px] outline-none">
        <option>{value}</option>
      </select>
      <span className="pointer-events-none flex w-3 items-center justify-center bg-[#b6d2e0]">
        <CaretDown />
      </span>
    </div>
  );
}

function Spinner({ label, value, className }: { label: string; value: string; className?: string }) {
  return (
    <div className={clsx('flex h-[13px] border border-[#8fa9b6] bg-white', className)}>
      <input aria-label={label} defaultValue={value} className="h-full w-full min-w-0 bg-white text-right text-[8px] outline-none" />
      <span className="flex w-2 shrink-0 items-center justify-center bg-[#d4e4ec]">
        <svg viewBox="0 0 6 10" className="h-[10px] w-[6px]"><path d="M1 4l2-2.500L5 4zM1 6.500l2 2.500 2-2.500z" fill="#335" /></svg>
      </span>
    </div>
  );
}

function Check({ label, checked, muted }: { label: string; checked?: boolean; muted?: boolean }) {
  return (
    <label className={clsx('flex items-center gap-[2px]', muted && 'text-[#a2abb0]')}>
      <span className="relative flex size-[9px]">
        <input type="checkbox" defaultChecked={checked} className="size-[9px] appearance-none border border-[#a0acb2] bg-white" />
        {checked && (
          <svg viewBox="0 0 9 9" className="pointer-events-none absolute inset-0"><path d="M2 4.500L4 7l3.500-5" fill="none" stroke="#8a9296" strokeWidth="1.200" /></svg>
        )}
      </span>
      {label}
    </label>
  );
}

function Pts({ label, value, muted }: { label: string; value: string; muted?: boolean }) {
  return (
    <label className="flex items-center gap-px">
      <input
        aria-label={label}
        defaultValue={value}
        className={clsx('h-[14px] w-3 rounded-[2px] border border-[#7d98a6] bg-white text-center text-[8px] outline-none', muted && 'text-[#9aa4a9]')}
      />
      pts
    </label>
  );
}

function QuoteButton({ side, big, pip, className }: { side: string; big: string; pip: string; className: string }) {
  return (
    <div className="flex flex-col items-center">
      <span className="h-[11px] leading-[11px]">{side}</span>
      <button className={clsx('flex h-5 w-[47px] items-end justify-center rounded-[1px] text-white', className)}>
        <span className="leading-[11px]">13 2</span>
        <span className="text-[18px] leading-[19px]">{big},</span>
        <span className="self-start leading-[12px]">{pip}</span>
      </button>
    </div>
  );
}

function QuickOrder() {
  return (
    <div className="mr-[2px] flex h-full w-64 shrink-0 items-stretch whitespace-nowrap rounded-l-lg border-l-2 border-[#a3bdca] bg-white pt-px">
      <svg viewBox="0 0 4 8" className="mt-[13px] h-[7px] w-[3px]"><path d="M0 0l4 4-4 4z" fill="#111" /></svg>
      <button aria-label="Réglages" className="mt-[10px] flex h-[14px] w-[14px] items-center justify-center border border-[#b6c2c8]">
        <WrenchIcon />
      </button>
      <label className="flex w-9 flex-col items-center leading-[11px]">
        Qté
        <input defaultValue="0.5" className="h-[14px] w-9 border border-[#8fa9b6] pr-[2px] text-right text-[8px] outline-none" />
      </label>
      <div className="ml-[3px] flex w-[23px] flex-col items-center border-l border-[#c6ced2]">
        <span className="h-[11px] leading-[11px]">Limite</span>
        <button aria-label="Limite"><OrderSheetIcon /></button>
      </div>
      <div className="ml-px flex w-[23px] flex-col items-center border-l border-[#c6ced2]">
        <span className="h-[11px] leading-[11px]">Stop</span>
        <button aria-label="Stop"><OrderSheetIcon stop /></button>
      </div>
      <div className="ml-px flex gap-px border-l border-[#c6ced2]">
        <QuoteButton side="Vendre" big="24" pip="3" className="bg-[#e0444a]" />
        <QuoteButton side="Acheter" big="25" pip="5" className="bg-[#26b02c]" />
      </div>
      <div className="ml-[2px] grid flex-1 grid-cols-[1fr_25px] items-center border-l border-[#c6ced2] pl-px">
        <Check label="Sg" checked muted />
        <Pts label="Stop en points" value="15" />
        <Check label="L" />
        <Pts label="Limite en points" value="10" muted />
      </div>
    </div>
  );
}

function IndicatorButton() {
  return (
    <div className="flex h-5 items-stretch">
      <button aria-label="Indicateurs"><IndicatorIcon /></button>
      <button aria-label="Liste des indicateurs" className="flex w-[11px] items-center justify-center border border-[#9aaab2] bg-white">
        <CaretDown />
      </button>
    </div>
  );
}

function ControlRow({ ticks }: { ticks?: boolean }) {
  return (
    <div className="flex h-[34px] items-center justify-between bg-linear-to-b from-[#c4d6df] to-[#eef4f7]">
      {ticks ? (
        <div className="grid flex-1 grid-cols-[106fr_58fr_105fr_73fr] items-center pl-[38px]">
          <Dropdown label="Nombre d'unités" value="100 unités" className="w-[61px]" />
          <Spinner label="Ticks" value="150" className="w-[54px]" />
          <Dropdown label="Unité de temps" value="(x) ticks" className="w-[62px]" />
          <IndicatorButton />
        </div>
      ) : (
        <div className="grid flex-1 grid-cols-[124fr_125fr_85fr] items-center pl-[50px]">
          <Dropdown label="Nombre d'unités" value="100 unités" className="w-[61px]" />
          <Dropdown label="Unité de temps" value="1 minute" className="w-[62px]" />
          <IndicatorButton />
        </div>
      )}
      <QuickOrder />
    </div>
  );
}

function ChartTab({ children }: { children: ReactNode }) {
  return <div className="absolute left-0 top-0 flex h-3 items-center gap-[2px] bg-[#b5d0dc] pl-px pr-[2px]">{children}</div>;
}

function BottomBar({ thumb }: { thumb: number }) {
  return (
    <div className="flex h-[22px] items-center bg-linear-to-b from-[#b3cedb] to-[#a3bfcd] pl-[2px] pr-[5px]">
      <button className="flex h-[17px] w-[49px] items-center gap-[2px] rounded-[2px] bg-[#2492dc] pl-[2px] text-white">
        <ShareIcon />
        Partager
      </button>
      <div className="ml-1 flex items-center gap-1">
        <button aria-label="Lier"><LinkIcon /></button>
        <button aria-label="Carnet"><DepthIcon /></button>
        <button aria-label="Profondeur"><OrderBookIcon /></button>
      </div>
      <div className="mx-[2px] flex h-[15px] flex-1 items-center">
        <button aria-label="Reculer" className="flex w-3 justify-center"><svg viewBox="0 0 4 8" className="h-[7px] w-1"><path d="M4 0L0 4l4 4z" fill="#111" /></svg></button>
        <div className="flex h-full flex-1 justify-end border border-[#8db0c2] bg-[#9cbbca]">
          <div className="flex h-full items-center justify-center border-x border-[#c4dae4] bg-linear-to-b from-[#b9d3df] to-[#a9c5d2] text-[#86a0ae]" style={{ width: `${thumb}%` }}>▫</div>
        </div>
        <button aria-label="Avancer" className="flex w-3 justify-center border border-[#8db0c2] py-[3px]"><svg viewBox="0 0 4 8" className="h-[7px] w-1"><path d="M0 0l4 4-4 4z" fill="#111" /></svg></button>
      </div>
      <div className="flex items-center gap-1">
        <button aria-label="Réglages"><SettingsGreenIcon /></button>
        <button aria-label="Ajuster"><FitIcon /></button>
        <button aria-label="Zoom arrière"><MagnifierIcon sign="-" /></button>
        <button aria-label="Zoom avant"><MagnifierIcon sign="+" /></button>
      </div>
    </div>
  );
}

/* ------------------------------------------------------------------ */
/* Order ticket and performance                                        */
/* ------------------------------------------------------------------ */

function BigQuote({ side, price, className }: { side: string; price: string; className: string }) {
  return (
    <button className={clsx('flex w-full flex-col items-center justify-between pb-[2px] pt-[3px]', className)}>
      <span className="text-[16px] leading-[20px] text-white/60">{side} 0,5</span>
      <span className="text-[30px] leading-[34px] text-black">{price}</span>
      <span>+ Stop (G) 15</span>
    </button>
  );
}

const summary: [string, ReactNode][] = [
  ['Gain latent :', <b>0,00 pts</b>],
  ['Gain Jour :', <b className="text-[#d80a14]">-58,78 pts</b>],
  ['Trades jour :', <TradesCount />],
];

function OrderTicket() {
  return (
    <section className="flex flex-col border-x border-[#4a86e8] bg-[#ccdce3]">
      <header className="flex h-4 items-center bg-linear-to-b from-[#5e9af6] to-[#3f7fe8] pr-[2px] text-white">
        <CandlesIcon white />
        <CaretDown className="mx-[2px]" color="#fff" />
        <b className="mr-[6px]">DAX</b>
        <InfoIcon />
        <b className="ml-[5px] bg-[#d80a14] px-px leading-[12px]">13 224,9 (-0,59%)</b>
        <b className="ml-[3px] flex-1">11:03:36 Allemagne 30 Cash (1€)</b>
        <div className="flex items-center gap-[2px]">
          <KeyboardIcon />
          <PinIcon />
          <WindowButtons />
        </div>
      </header>
      <div className="grid grid-cols-[128fr_164fr_128fr]">
        <dl className="grid h-[103px] grid-cols-[48px_1fr] content-start items-center gap-y-[2px] pl-[5px] pt-[14px]">
          {summary.map(([label, value]) => (
            <Fragment key={label}>
              <dt className="leading-[10px]">{label}</dt>
              <dd className="leading-[10px]">{value}</dd>
            </Fragment>
          ))}
          {['Ordres :', 'Position :'].map((label, i) => (
            <Fragment key={label}>
              <dt className="leading-[13px]">{label}</dt>
              <dd className="flex items-center leading-[13px]">
                <b className={clsx('mr-[2px]', i === 1 && 'text-[#189a1c]')}>0</b>
                <CancelIcon red={i === 1} />
                <span className="ml-[6px] mr-[2px]">/</span>
                <b className="mr-px">0</b>
                <GearsIcon />
              </dd>
            </Fragment>
          ))}
          <dt className="leading-[12px]">Durée pos. :</dt>
          <dd className="font-bold">-</dd>
        </dl>
        <div className="flex flex-col items-center border-x border-[#9db4bf] pt-[9px]">
          <label className="flex flex-col items-center leading-[12px]">
            Qté
            <input defaultValue="0.5" className="h-6 w-14 border border-[#b2c2ca] bg-white pr-px text-right text-[16px] outline-none" />
          </label>
          <div className="mt-[5px] flex items-center gap-1">
            <Check label="Stop (G)" checked muted />
            <Pts label="Stop garanti" value="15" />
            <span className="w-1" />
            <Check label="Limite" />
            <Pts label="Limite" value="10" muted />
          </div>
          <hr className="mt-3 w-[154px] border-[#a3b7c1]" />
          <div className="mt-[6px] flex gap-[52px]">
            <Spinner label="Ticks du stop" value="1" className="w-[30px]" />
            <Spinner label="Ticks de la limite" value="1" className="w-[30px]" />
          </div>
        </div>
        <div />
        <div className="flex h-[90px] border-t border-[#9db4bf]">
          <BigQuote side="Vendre" price="13 224,3" className="bg-[#ebb9bb]" />
        </div>
        <div className="flex flex-col border border-b-0 border-[#9db4bf] text-[#93a2aa]">
          <div className="grid h-[18px] grid-cols-2 border-b border-[#a9bcc5]">
            <button className="border-r border-[#a9bcc5]">Stop à 1 ticks</button>
            <button>Limite à 1 ticks</button>
          </div>
          <div className="flex flex-1 items-center justify-center">Pas de position</div>
        </div>
        <div className="flex border-t border-[#9db4bf]">
          <BigQuote side="Acheter" price="13 225,5" className="bg-[#a8cfa8]" />
        </div>
      </div>
      <div className="flex h-[21px] items-stretch border-t border-[#9db4bf] text-[#93a2aa]">
        <button aria-label="Affichage" className="flex w-5 items-center justify-center">
          <Glyph>
            <rect x="1" y="2" width="14" height="11" fill="#fff" stroke="#555" />
            <path d="M1 6h4.500v7H1z" fill="#f08080" />
            <path d="M10.500 2H15v8h-4.500z" fill="#3cc04c" />
            <path d="M1 6h14M1 9.500h14M5.500 2v11M10.500 2v11" stroke="#555" />
            <path d="M11 13.500h5L13.500 16z" fill="#111" />
          </Glyph>
        </button>
        <button className="flex-[160] border-x border-[#a9bcc5]">Inverser position</button>
        <button className="flex-[184] border-r border-[#a9bcc5]">Pas d'ordres en attente</button>
        <div className="flex w-[57px] items-center justify-around text-black">
          <Glyph className="size-[14px]"><rect x=".5" y=".5" width="15" height="15" fill="#fff" stroke="#9aa" /><path d="M1 13h14" stroke="#f06060" strokeWidth="2.500" /><path d="M2 6l4 4 8-8" stroke="#18b028" strokeWidth="2" /></Glyph>
          <LinkIcon />
          <Glyph className="size-[14px]"><path d="M8 2h4v3h3v3h-4v3h4v3h-4" stroke="#111" strokeWidth="1.300" fill="#f08080" /><path d="M2 2h7v3H5M2 6h5" stroke="#111" strokeWidth="1.300" fill="#4c4" /><path d="M2 14L9 7" stroke="#111" strokeWidth="3.200" /><path d="M2 14L9 7" stroke="#fff" strokeWidth="1.200" /></Glyph>
        </div>
      </div>
      <table className="w-full table-fixed">
        <thead>
          <tr className="h-3 bg-[#44699a] leading-[12px] text-white">
            <th className="w-[6%] p-0">
              <div className="flex items-center gap-[2px] pl-px">
                <Glyph className="size-[11px]"><rect x="1" y="1" width="14" height="14" fill="#fff" /><path d="M4 12V4h8M6 6l6 6M12 8v4H8" stroke="#44699a" strokeWidth="1.800" /></Glyph>
                <WrenchIcon light />
              </div>
            </th>
            <th className="w-[28%] border-r border-[#8ba6c8] p-0 font-normal">Qté</th>
            <th className="w-[35%] border-r border-[#8ba6c8] p-0 font-normal">Prix de revient unitaire</th>
            <th className="p-0">
              <Glyph className="mx-auto size-2"><path d="M8 1l5 6h-3v7H6V7H3z" fill="#fff" /></Glyph>
            </th>
          </tr>
        </thead>
      </table>
      <div className="flex-1 bg-[#9ab8c8]" />
      <footer className="grid h-[13px] grid-cols-3 items-center bg-[#b4ccd7] px-[2px]">
        <span>Offre <span className="text-[#2c86d8]">➔</span><b>0</b></span>
        <span className="text-center">Spread: 1,2</span>
        <span className="text-right"><b>0</b><span className="inline-block rotate-180 text-[#2c86d8]">➔</span> Demande</span>
      </footer>
    </section>
  );
}

function PerformancePanel() {
  return (
    <section className="border-x-2 border-[#9dbccb]">
      <header className="flex h-4 items-center bg-linear-to-b from-[#c0d7e2] to-[#a9c5d2]">
        <CandlesIcon />
        <span>Performance</span>
        <CaretDown className="ml-[6px] mr-[2px]" />
        <b className="flex-1 whitespace-nowrap">Tous les instruments</b>
        <span className="mr-px bg-white px-px leading-[12px]">Aujc</span>
        <WindowButtons color="#8295a0" />
      </header>
      <PerformanceChart />
    </section>
  );
}

/* ------------------------------------------------------------------ */
/* Page                                                                */
/* ------------------------------------------------------------------ */

const menus = ['Fichier', 'Affichage', 'Trading', 'Objets', 'Options', 'Aide'];
const underlined = [0, 0, 0, 0, -1, 2];

export default function App() {
  return (
    <div className="min-h-screen bg-[#3c4a54] pb-px font-['Liberation_Sans',Arial,sans-serif] text-[8px] leading-[10px] text-[#0e171d]">
      <nav className="flex h-4 items-center bg-linear-to-b from-[#a9c4d2] via-[#c0d8e4] to-[#a9c4d2] pl-[2px] pr-1">
        <CandlesIcon />
        <div className="ml-[3px] flex flex-1 gap-[7px]">
          {menus.map((m, i) => (
            <button key={m}>
              {underlined[i] < 0 ? m : (
                <>{m.slice(0, underlined[i])}<u>{m[underlined[i]]}</u>{m.slice(underlined[i] + 1)}</>
              )}
            </button>
          ))}
        </div>
        <span className="mr-[3px]">DAX</span>
        <span className="mr-[3px] rounded-[1px] bg-[#2c3238] px-[3px] font-bold leading-[13px] text-white">
          <span className="text-[#9ae020]">ProRealTime</span> Complete
        </span>
        <PinIcon color="#8295a0" />
        <button aria-label="Réduire" className="ml-[3px]"><svg viewBox="0 0 9 9" className="size-[9px]"><path d="M1 7.500h7" stroke="#7d919c" strokeWidth="1.300" /></svg></button>
        <button aria-label="Fermer"><svg viewBox="0 0 9 9" className="size-[9px]"><path d="M1.500 1l6 7M7.500 1l-6 7" stroke="#7d919c" strokeWidth="1.300" /></svg></button>
      </nav>

      <div className="flex h-[23px] items-center bg-linear-to-b from-[#b4cfdc] to-[#9fbccb] pl-1 pr-[2px]">
        <div className="flex h-[14px] w-[99px] items-center bg-white pr-px">
          <input aria-label="Recherche" placeholder="Recherche ..." className="h-full min-w-0 flex-1 px-[2px] text-[8px] italic outline-none placeholder:text-[#b0b6ba]" />
          <svg viewBox="0 0 12 12" className="size-3"><circle cx="7" cy="5" r="3.700" fill="none" stroke="#222" /><path d="M4.500 8L1 11.500" stroke="#222" strokeWidth="1.500" /></svg>
        </div>
        <div className="flex items-center">
          {tools.map((t) => (
            <button key={t.name} aria-label={t.name} className={clsx('flex h-[19px] w-[19px] items-center justify-center', t.active && 'ml-[7px] bg-[#8ba1ad]')}>
              <Glyph className="size-[15px]">{t.icon}</Glyph>
            </button>
          ))}
        </div>
        <div className="mr-auto grid grid-cols-14">
          {palette.flat().map((c) => (
            <button key={c} aria-label={c} className="size-2 border-b border-r border-white/30" style={{ backgroundColor: c }} />
          ))}
        </div>
        <button className="flex h-[17px] w-11 items-center justify-center gap-px bg-[#44cc44]">Push+ <CandlesIcon /></button>
        <button className="flex h-[17px] w-[52px] items-center justify-center gap-[2px] bg-[#7ede7e]">
          DealThru
          <svg viewBox="0 0 10 14" className="h-[14px] w-[10px]"><path d="M9 1L4 5l3 2" fill="none" stroke="#e02020" strokeWidth="2" /><path d="M7 6L2 12h4" fill="none" stroke="#0c7c14" strokeWidth="2" /></svg>
        </button>
      </div>

      <main className="grid grid-cols-[642fr_638fr_640fr] items-start bg-[#a5c4d3]">
        <section className="flex flex-col">
          <TitleBar />
          <StatusRow />
          <ControlRow />
          <div className="relative mx-[2px]">
            <LeftRenko />
            <ChartTab>Renko (1.5) <WrenchIcon /><CloseDot /></ChartTab>
          </div>
          <BottomBar thumb={22} />
        </section>

        <section className="flex flex-col">
          <TitleBar />
          <StatusRow />
          <ControlRow ticks />
          <div className="relative mx-[2px]">
            <MiddleRenko />
            <ChartTab>Renko (1) <WrenchIcon /><CloseDot /></ChartTab>
          </div>
          <BottomBar thumb={22} />
        </section>

        <section className="flex flex-col">
          <TitleBar />
          <StatusRow />
          <ControlRow />
          <div className="relative mx-[2px]">
            <PriceChart />
            <ChartTab>
              Prix <WrenchIcon /><WindowDot /><CloseDot /><ArrowTag /><ArrowTag up />
              <span className="absolute left-full top-0 ml-px whitespace-nowrap leading-[12px] text-[#f01414]">Jour : +Haut 13 316,1 +Bas 13 198,9</span>
            </ChartTab>
          </div>
          <div className="relative mx-[2px]">
            <RsiChart />
            <ChartTab>Relative strength index (RSI) (21) Relative strength index (RSI) (14) <WrenchIcon /><WindowDot /><CloseDot /></ChartTab>
          </div>
          <BottomBar thumb={15} />
          <div className="grid grid-cols-[422fr_218fr]">
            <OrderTicket />
            <PerformancePanel />
          </div>
        </section>
      </main>
    </div>
  );
}
